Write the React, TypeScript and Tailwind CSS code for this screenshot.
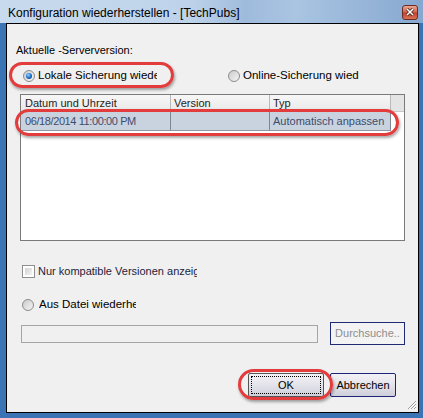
import React from "react";

const font = "font-['Liberation_Sans',Arial,sans-serif]";

const Radio: React.FC<{ checked?: boolean }> = ({ checked }) => (
  <svg width="12" height="12" viewBox="0 0 12 12" className="shrink-0">
    <defs>
      <linearGradient id="rbg" x1="0" y1="0" x2="1" y2="1">
        <stop offset="0" stopColor="#c9c9c9" />
        <stop offset="1" stopColor="#f7f7f7" />
      </linearGradient>
      <radialGradient id="rdot" cx="0.4" cy="0.35" r="0.7">
        <stop offset="0" stopColor="#9fd4ff" />
        <stop offset="0.5" stopColor="#2f86dc" />
        <stop offset="1" stopColor="#0d3f86" />
      </radialGradient>
    </defs>
    <circle cx="6" cy="6" r="5.5" fill="url(#rbg)" stroke="#8b8b8b" strokeWidth="1" />
    {checked && <circle cx="6" cy="6" r="3" fill="url(#rdot)" />}
  </svg>
);

const Checkbox: React.FC = () => (
  <div className="w-[13px] h-[13px] border border-[#8e8f8f] bg-white p-[2px] shrink-0">
    <div className="w-full h-full bg-[linear-gradient(135deg,#d2d2d2,#f4f4f4)]" />
  </div>
);

const Ellipse: React.FC<{ className: string }> = ({ className }) => (
  <div
    className={
      "absolute rounded-[999px] border-[3px] border-[#e23c3c] shadow-[1px_2px_3px_rgba(0,0,0,0.35)] pointer-events-none " +
      className
    }
  />
);

export default function App() {
  return (
    <div className={`w-[423px] h-[418px] bg-[#3a74b4] flex flex-col text-[11px] text-black ${font}`}>
      {/* title bar */}
      <div className="h-[23px] shrink-0 flex items-center justify-between pl-[8px] pr-[5px] bg-[linear-gradient(90deg,#c8daed_0%,#bed3ea_45%,#9fbbdc_58%,#aac4e2_70%,#86a8d0_100%)]">
        <span className="text-[12px] text-black leading-none pt-[2px]">
          Konfiguration wiederherstellen - [TechPubs]
        </span>
        <div className="w-[16px] h-[15px] mt-[1px] rounded-[3px] border border-[#6e2b20] bg-[linear-gradient(180deg,#e9a896_0%,#d2674f_45%,#c0412b_55%,#d8745a_100%)] flex items-center justify-center">
          <svg width="8" height="8" viewBox="0 0 8 8">
            <path d="M1 1 L7 7 M7 1 L1 7" stroke="#3a1a14" strokeWidth="3" />
            <path d="M1 1 L7 7 M7 1 L1 7" stroke="#ffffff" strokeWidth="1.6" />
          </svg>
        </div>
      </div>

      {/* content */}
      <div className="ml-[6px] w-[413px] h-[390px] border border-black bg-[#f0f0f0] relative flex flex-col">
        <div className="ml-[9px] mt-[19px] h-[14px] leading-[14px]">Aktuelle -Serverversion:</div>

        <div className="mt-[12px] h-[14px] flex items-center">
          <div className="ml-[16px] flex items-center gap-[3px] w-[134px] overflow-hidden">
            <Radio checked />
            <span className="whitespace-nowrap text-[11.5px]">Lokale Sicherung wiederherstellen</span>
          </div>
          <div className="ml-[71px] flex items-center gap-[3px] w-[140px] overflow-hidden">
            <Radio />
            <span className="whitespace-nowrap text-[11.5px]">Online-Sicherung wied</span>
          </div>
        </div>

        {/* table */}
        <div className="ml-[13px] mt-[11px] w-[385px] h-[147px] border border-[#7a7a7a] bg-white flex flex-col">
          <div className="h-[17px] flex bg-[linear-gradient(180deg,#f7f7f7,#e9e9e9)] border-b border-[#c8c8c8]">
            <div className="w-[150px] px-[4px] leading-[17px] border-r border-[#b9b9b9] text-[#1f1f1f]">Datum und Uhrzeit</div>
            <div className="w-[99px] px-[3px] leading-[17px] border-r border-[#b9b9b9] text-[#1f1f1f]">Version</div>
            <div className="w-[121px] px-[3px] leading-[17px] border-r border-[#b9b9b9] text-[#1f1f1f]">Typ</div>
            <div className="flex-1 bg-[#e4e4e4]" />
          </div>
          <div className="h-[19px] w-[370px] flex bg-[#c9d3df] border-b border-[#8e97a3] text-[#3d4c6e]">
            <div className="w-[150px] px-[4px] leading-[19px] border-r border-[#7f8794] tracking-[-0.4px] whitespace-nowrap">06/18/2014 11:00:00 PM</div>
            <div className="w-[99px] border-r border-[#7f8794]" />
            <div className="w-[121px] px-[3px] leading-[19px] border-r border-[#7f8794] whitespace-nowrap">Automatisch anpassen</div>
          </div>
        </div>

        <div className="mt-[23px] h-[14px] ml-[15px] flex items-center gap-[3px]">
          <Checkbox />
          <span className="whitespace-nowrap text-[#1c1c3c] w-[159px] overflow-hidden">Nur kompatible Versionen anzeigen</span>
        </div>

        <div className="mt-[20px] h-[14px] ml-[15px] flex items-center gap-[5px]">
          <Radio />
          <span className="whitespace-nowrap w-[97px] overflow-hidden text-[11.5px]">Aus Datei wiederherstellen</span>
        </div>

        <div className="mt-[10px] h-[23px] flex items-center">
          <div className="ml-[14px] w-[297px] h-[18px] border border-[#a5a5a5] bg-[#f0f0f0]" />
          <div className="ml-[12px] w-[75px] h-[23px] border border-[#1f2a74] bg-[#f3f3f3] flex items-center justify-center text-[#8d8d8d] whitespace-nowrap">
            Durchsuche..
          </div>
        </div>

        <div className="mt-[28px] h-[24px] flex justify-end gap-[6px] pr-[22px]">
          <div className="w-[76px] h-[24px] border border-[#555] rounded-[2px] bg-[linear-gradient(180deg,#f2f2f6_0%,#e3e3ea_50%,#cfcfdc_100%)] p-[2px]">
            <div className="w-full h-full border border-dotted border-black flex items-center justify-center">OK</div>
          </div>
          <div className="w-[66px] h-[24px] border border-[#1c2378] rounded-[2px] bg-[linear-gradient(180deg,#f2f2f6_0%,#e3e3ea_50%,#cfcfdc_100%)] flex items-center justify-center">
            Abbrechen
          </div>
        </div>

        {/* resize grip */}
        <svg width="11" height="11" viewBox="0 0 11 11" className="absolute right-[1px] bottom-[2px]">
          <path d="M10 2 L2 10 M10 5 L5 10 M10 8 L8 10" stroke="#9a9a9a" strokeWidth="1" />
          <path d="M10 3 L3 10 M10 6 L6 10 M10 9 L9 10" stroke="#ffffff" strokeWidth="1" />
        </svg>

        {/* annotations */}
        <Ellipse className="left-[2px] top-[38px] w-[165px] h-[26px]" />
        <Ellipse className="left-[8px] top-[85px] w-[384px] h-[27px]" />
        <Ellipse className="left-[231px] top-[345px] w-[95px] h-[31px]" />
      </div>
    </div>
  );
}
